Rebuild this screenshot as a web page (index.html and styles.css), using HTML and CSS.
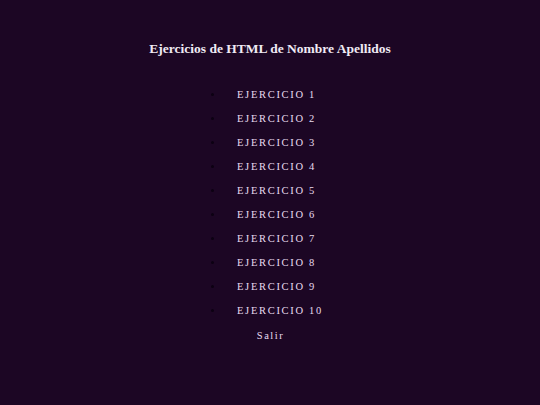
FILE: index.html
```html
<!DOCTYPE html>
<html lang="es">
<head>
<meta charset="utf-8">
<title>Ejercicios</title>
<link rel="stylesheet" href="styles.css">
</head>
<body>
<h1 class="title">Ejercicios de HTML de Nombre Apellidos</h1>
<nav class="menu">
  <ul class="list">
    <li class="item"><a href="#">Ejercicio 1</a></li>
    <li class="item"><a href="#">Ejercicio 2</a></li>
    <li class="item"><a href="#">Ejercicio 3</a></li>
    <li class="item"><a href="#">Ejercicio 4</a></li>
    <li class="item"><a href="#">Ejercicio 5</a></li>
    <li class="item"><a href="#">Ejercicio 6</a></li>
    <li class="item"><a href="#">Ejercicio 7</a></li>
    <li class="item"><a href="#">Ejercicio 8</a></li>
    <li class="item"><a href="#">Ejercicio 9</a></li>
    <li class="item"><a href="#">Ejercicio 10</a></li>
  </ul>
  <a class="exit" href="#">Salir</a>
</nav>
</body>
</html>
```
FILE: styles.css
```css
html, body {
  margin: 0;
  padding: 0;
  background: #1c0624;
  height: 100%;
}
body {
  font-family: "Liberation Serif", "Times New Roman", serif;
  color: #e8dcf0;
}
.title {
  margin: 0;
  padding-top: 41px;
  text-align: center;
  font-size: 13.5px;
  font-weight: bold;
  color: #f0eaf4;
}
.menu {
  display: flex;
  flex-direction: column;
  align-items: center;
  padding-top: 25px;
}
.list {
  list-style: none;
  margin: 0;
  padding: 0 0 0 211px;
  align-self: flex-start;
}
.item {
  display: flex;
  align-items: center;
  height: 24px;
}
.item::before {
  content: "";
  width: 3px;
  height: 3px;
  border-radius: 50%;
  background: #0c0112;
  margin-right: 23px;
}
.item a, .exit {
  color: #e8dcf0;
  text-decoration: none;
  font-size: 10.5px;
  letter-spacing: 1.7px;
}
.item a {
  text-transform: uppercase;
}
.exit {
  letter-spacing: 1.5px;
  line-height: 24px;
  margin-top: 2px;
  margin-left: 1px;
}
```
